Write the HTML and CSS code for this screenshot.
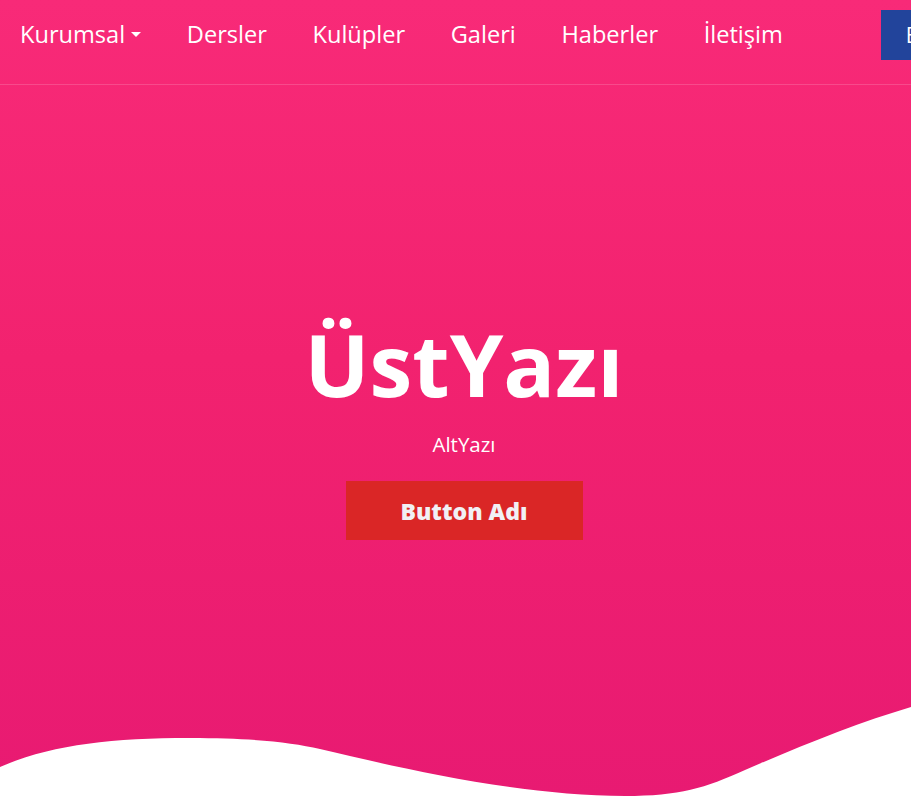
FILE: index.html
```html
<!DOCTYPE html>
<html lang="tr">
<head>
<meta charset="utf-8">
<title>ÜstYazı</title>
<link rel="stylesheet" href="styles.css">
</head>
<body>
<section class="hero">
  <header class="topbar">
    <nav class="menu">
      <a class="menu-link dropdown" href="#">Kurumsal<span class="caret"></span></a>
      <a class="menu-link" href="#">Dersler</a>
      <a class="menu-link" href="#">Kulüpler</a>
      <a class="menu-link" href="#">Galeri</a>
      <a class="menu-link" href="#">Haberler</a>
      <a class="menu-link" href="#">İletişim</a>
    </nav>
    <a class="cta-blue" href="#">Başvuru</a>
  </header>
  <div class="hero-content">
    <h1 class="hero-title">ÜstYazı</h1>
    <p class="hero-sub">AltYazı</p>
    <a class="hero-btn" href="#">Button Adı</a>
  </div>
  <svg class="wave" viewBox="0 700 911 96" preserveAspectRatio="none" aria-hidden="true">
    <path d="M0,767 C50,745 110,738 190,738 C250,738 290,742 320,749 C400,768 520,796 625,796 C680,796 705,788 745,770 C800,746 860,722 911,707 L911,796 L0,796 Z" fill="#ffffff"/>
  </svg>
</section>
</body>
</html>
```
FILE: styles.css
```css
html, body {
  margin: 0;
  padding: 0;
}
body {
  font-family: "Open Sans", "Noto Sans", sans-serif;
  background: #ffffff;
  overflow: hidden;
}
.hero {
  position: relative;
  height: 796px;
  overflow: hidden;
  background: linear-gradient(180deg, #f82a78 0%, #f2226f 45%, #e81a72 100%);
}
.topbar {
  display: flex;
  align-items: center;
  height: 50px;
  padding: 10px 0 24px 20px;
  border-bottom: 1px solid rgba(255, 255, 255, 0.16);
  white-space: nowrap;
}
.menu {
  display: flex;
  align-items: center;
  gap: 45.6px;
}
.menu-link {
  color: #ffffff;
  text-decoration: none;
  font-size: 23.6px;
  line-height: 1;
  display: inline-flex;
  align-items: center;
}
.caret {
  display: inline-block;
  width: 0;
  height: 0;
  margin-left: 6px;
  margin-top: -2px;
  border-top: 5.5px solid #ffffff;
  border-left: 5.5px solid transparent;
  border-right: 5.5px solid transparent;
}
.cta-blue {
  margin-left: 98px;
  display: inline-flex;
  align-items: center;
  height: 50px;
  padding: 0 25px;
  background: #22449b;
  color: #ffffff;
  text-decoration: none;
  font-size: 21px;
}
.hero-content {
  display: flex;
  flex-direction: column;
  align-items: center;
  padding-top: 227px;
  padding-left: 17px;
  color: #ffffff;
  text-align: center;
}
.hero-title {
  margin: 0;
  font-size: 86px;
  font-weight: 700;
  line-height: 1.2;
}
.hero-sub {
  margin: 15px 0 0;
  font-size: 20.5px;
  line-height: 1.4;
}
.hero-btn {
  margin-top: 22.6px;
  display: flex;
  align-items: center;
  justify-content: center;
  width: 237px;
  height: 59px;
  background: #da2626;
  color: #f1f0f5;
  text-decoration: none;
  font-size: 23px;
  font-weight: 800;
}
.wave {
  position: absolute;
  left: 0;
  bottom: 0;
  width: 100%;
  height: 96px;
  display: block;
}
```
